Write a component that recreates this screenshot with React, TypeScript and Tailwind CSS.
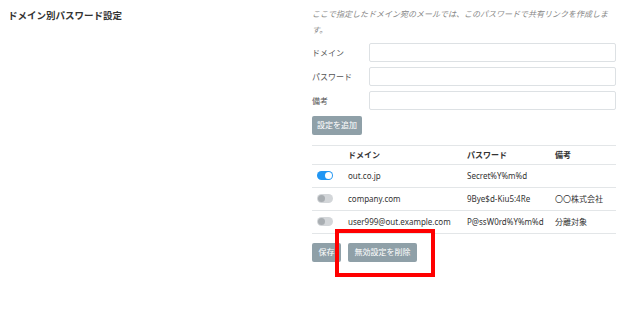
import React from "react";

const font = { fontFamily: '"Noto Sans", "Noto Sans CJK JP", sans-serif' };

type Row = { on: boolean; domain: string; password: string; note: string };

const rows: Row[] = [
  { on: true, domain: "out.co.jp", password: "Secret%Y%m%d", note: "" },
  { on: false, domain: "company.com", password: "9Bye$d-Kiu5:4Re", note: "〇〇株式会社" },
  { on: false, domain: "user999@out.example.com", password: "P@ssW0rd%Y%m%d", note: "分離対象" },
];

function Toggle({ on }: { on: boolean }) {
  return (
    <div
      className={`relative h-[9px] w-[16px] rounded-full ${on ? "bg-[#2196f3]" : "bg-[#d3d6d9]"}`}
    >
      <div
        className={`absolute top-[1px] h-[7px] w-[7px] rounded-full ${on ? "left-[8px] bg-white" : "left-[1px] bg-[#a9aeb2]"}`}
      />
    </div>
  );
}

function Field({ label }: { label: string }) {
  return (
    <div className="flex items-center h-[19px]">
      <span className="w-[57px] text-[8px] text-[#555]">{label}</span>
      <div className="flex-1 h-[19px] border border-[#dde1e4] rounded-[2px] bg-white" />
    </div>
  );
}

export default function App() {
  return (
    <div className="w-[621px] h-[317px] bg-white flex text-[#333]" style={font}>
      <div className="w-[312px] pl-[8px] pt-[9px]">
        <h2 className="text-[9.5px] leading-[14px] font-bold text-[#333]">ドメイン別パスワード設定</h2>
      </div>

      <div className="w-[304px] pt-[6px]">
        <p className="text-[8px] italic text-[#888] leading-[16px]">
          ここで指定したドメイン宛のメールでは、このパスワードで共有リンクを作成します。
        </p>

        <div className="mt-[5px] flex flex-col gap-[5px]">
          <Field label="ドメイン" />
          <Field label="パスワード" />
          <Field label="備考" />
        </div>

        <button className="mt-[4px] h-[19px] px-[5px] rounded-[2px] bg-[#8fa0a8] text-white text-[8px]">
          設定を追加
        </button>

        <table className="mt-[10px] w-full text-[8px] border-collapse">
          <thead>
            <tr className="border-t border-b border-[#e3e6e8] h-[19px]">
              <th className="w-[36px]" />
              <th className="text-left font-bold w-[119px]">ドメイン</th>
              <th className="text-left font-bold w-[88px]">パスワード</th>
              <th className="text-left font-bold">備考</th>
            </tr>
          </thead>
          <tbody>
            {rows.map((r) => (
              <tr key={r.domain} className="border-b border-[#e3e6e8] h-[23px]">
                <td className="pl-[5px]">
                  <Toggle on={r.on} />
                </td>
                <td>{r.domain}</td>
                <td>{r.password}</td>
                <td>{r.note}</td>
              </tr>
            ))}
          </tbody>
        </table>

        <div className="mt-[9px] flex items-start gap-[7px]">
          <button className="h-[19px] w-[29px] rounded-[2px] bg-[#8fa0a8] text-white text-[8px]">
            保存
          </button>
          <div className="relative flex">
            <button className="h-[19px] w-[69px] rounded-[2px] bg-[#8fa0a8] text-white text-[8px]">
              無効設定を削除
            </button>
            <div className="absolute left-[-13px] top-[-14px] w-[100px] h-[48px] border-[4px] border-[#ff0000]" />
          </div>
        </div>
      </div>
    </div>
  );
}
